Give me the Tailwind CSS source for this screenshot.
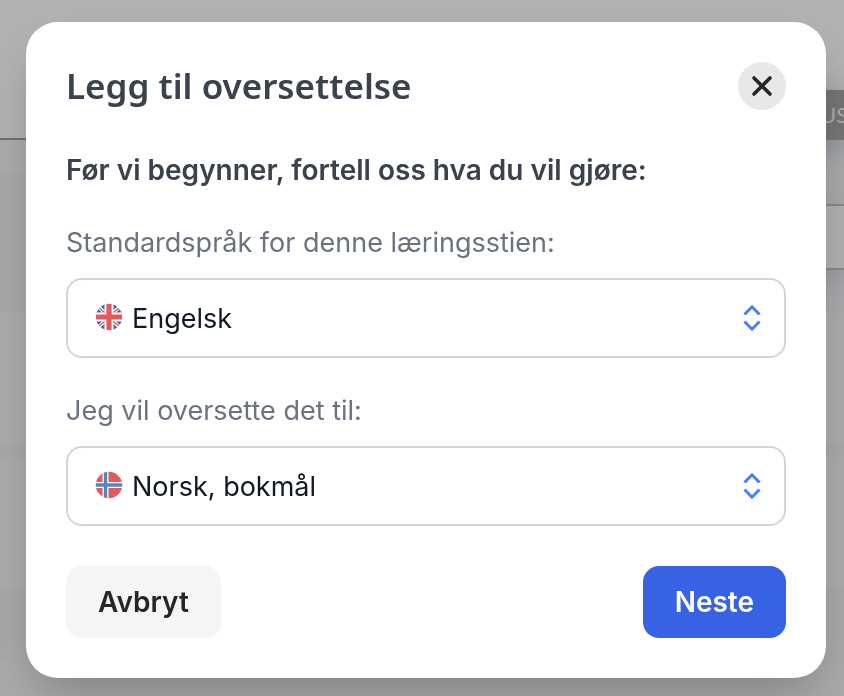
<!DOCTYPE html>
<html lang="nb">
<head>
    <meta charset="UTF-8">
    <meta name="viewport" content="width=device-width, initial-scale=1.0">
    <title>Legg til oversettelse</title>
    <script src="https://cdn.jsdelivr.net/npm/@tailwindcss/browser@4"></script>
</head>
<body class="min-h-screen overflow-hidden bg-[#f2f2f2] font-['Inter',sans-serif]">
    <!-- Page behind the dialog -->
    <div class="flex h-screen flex-col overflow-hidden" aria-hidden="true">
        <header class="flex h-[140px] shrink-0 items-end justify-end border-b-2 border-[#a0a0a0] bg-[#fefefe]">
            <div class="h-[50px] w-16 translate-y-0.5 overflow-hidden bg-[#a6a6a6] pl-10 font-['Lato',sans-serif] text-[22px] leading-[50px] font-normal whitespace-nowrap text-[#f0f0f0] shadow-[0_8px_32px_#b4c0d4]">US</div>
        </header>
        <div class="h-8 shrink-0 bg-[#f3f3f3]"></div>
        <div class="flex h-[141px] shrink-0 items-start justify-end bg-[#f0f0f4] pt-8">
            <div class="h-[66px] w-1/2 border-y-2 border-[#c0c0c4] bg-[#fafafa] shadow-[0_8px_24px_#d0d4d8]"></div>
        </div>
        <div class="h-[131px] shrink-0 bg-[#f4f4f6]"></div>
        <div class="h-3.5 shrink-0 bg-[#f0f0f2]"></div>
        <div class="h-[130px] shrink-0 bg-[#f4f4f6]"></div>
        <div class="h-[72px] shrink-0 bg-[#f0f0f3]"></div>
        <div class="grow bg-[#f2f2f2]"></div>
    </div>

    <div class="fixed inset-0 flex items-start bg-black/30 pt-[22px] pr-[18px] pl-[26px]">
        <div role="dialog" aria-modal="true" aria-labelledby="dialogTitle" class="w-full rounded-[32px] bg-white p-10 shadow-[0_24px_48px_-12px_rgba(0,0,0,0.25)]">
            <div class="flex h-12 items-center justify-between">
                <h2 id="dialogTitle" class="font-['Noto_Sans',sans-serif] text-[35px] font-semibold text-[#3a424e]">Legg til oversettelse</h2>
                <button type="button" id="closeButton" aria-label="Lukk" class="flex size-12 items-center justify-center rounded-full bg-[#e8e8e8] text-[#262626]">
                    <svg class="size-6" viewBox="0 0 24 24" fill="none" stroke="currentColor" stroke-width="3.600" stroke-linecap="round"><path d="M4 4l16 16M20 4L4 20"/></svg>
                </button>
            </div>

            <form id="translationForm" class="text-[27px] leading-[42px]">
                <p class="mt-10 text-[28px] leading-10 font-semibold text-[#3a424e]">Før vi begynner, fortell oss hva du vil gjøre:</p>

                <label for="defaultLanguage" class="mt-8 block text-[#6b7280]">Standardspråk for denne læringsstien:</label>
                <div class="relative mt-3.5">
                    <select id="defaultLanguage" name="defaultLanguage" class="block h-20 w-full appearance-none rounded-2xl border-2 border-[#d2d5da] bg-white pt-0.5 pr-16 pl-16 text-[#111827]">
                        <option value="en" selected>Engelsk</option>
                        <option value="nb">Norsk, bokmål</option>
                    </select>
                    <svg class="pointer-events-none absolute top-[25px] left-[29px] size-7" viewBox="0 0 28 28">
                        <defs><clipPath id="flagClip"><circle cx="14" cy="14" r="13.2"/></clipPath></defs>
                        <g clip-path="url(#flagClip)">
                            <path fill="#fff" d="M0 0h28v28H0z"/>
                            <path fill="#4168a8" d="M5 0h4.500v7L5 3zM18.500 0H23v3l-4.500 4zM5 25l4.500-4v7H5zM18.500 21l4.500 4v3h-4.500zM0 9.500V6h3l4 3.500zM28 9.500V6h-3l-4 3.500zM0 18.500V22h3l4-3.500zM28 18.500V22h-3l-4-3.500z"/>
                            <path stroke="#e05a60" stroke-width="1.500" d="M3 4l6.500 5.500M25 4l-6.500 5.500M3 24l6.500-5.500M25 24l-6.500-5.500"/>
                            <path stroke="#fff" stroke-width="8" d="M14 0v28M0 14h28"/>
                            <path stroke="#e05a60" stroke-width="5.200" d="M14 0v28M0 14h28"/>
                        </g>
                    </svg>
                    <svg class="pointer-events-none absolute top-6 right-[18px] size-8" viewBox="0 0 32 32" fill="none" stroke="#4a80f5" stroke-width="3"><path d="M8.500 12.500L16 4.800l7.500 7.700M8.500 19.500l7.500 7.700 7.500-7.700"/></svg>
                </div>

                <label for="targetLanguage" class="mt-8 block text-[#6b7280]">Jeg vil oversette det til:</label>
                <div class="relative mt-3.5">
                    <select id="targetLanguage" name="targetLanguage" class="block h-20 w-full appearance-none rounded-2xl border-2 border-[#d2d5da] bg-white pt-0.5 pr-16 pl-16 text-[#111827]">
                        <option value="nb" selected>Norsk, bokmål</option>
                        <option value="en">Engelsk</option>
                    </select>
                    <svg class="pointer-events-none absolute top-[25px] left-[29px] size-7" viewBox="0 0 28 28">
                        <g clip-path="url(#flagClip)">
                            <path fill="#e05a60" d="M0 0h28v28H0z"/>
                            <path stroke="#fff" stroke-width="6" d="M10.500 0v28M0 14h28"/>
                            <path stroke="#5286bd" stroke-width="3.400" d="M10.500 0v28M0 14h28"/>
                        </g>
                    </svg>
                    <svg class="pointer-events-none absolute top-6 right-[18px] size-8" viewBox="0 0 32 32" fill="none" stroke="#4a80f5" stroke-width="3"><path d="M8.500 12.500L16 4.800l7.500 7.700M8.500 19.500l7.500 7.700 7.500-7.700"/></svg>
                </div>

                <div class="mt-10 flex justify-between text-[28px]">
                    <button type="button" id="cancelButton" class="h-[72px] rounded-2xl bg-[#f5f5f5] px-8 font-semibold text-[#262626]">Avbryt</button>
                    <button type="submit" class="h-[72px] rounded-2xl bg-[#3662e3] px-8 font-semibold text-white">Neste</button>
                </div>
            </form>
        </div>
    </div>
</body>
</html>
